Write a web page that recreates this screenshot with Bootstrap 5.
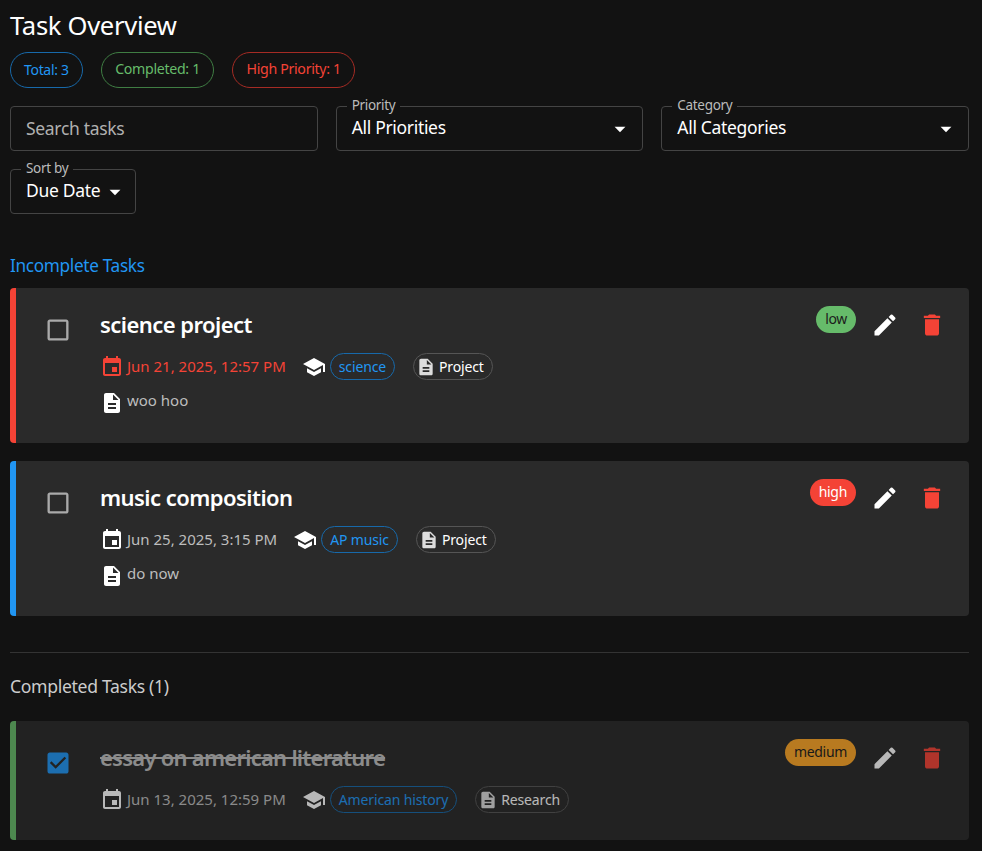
<!DOCTYPE html>
<html lang="en">
<head>
<meta charset="utf-8">
<title>Task Overview</title>
<link href="https://cdn.jsdelivr.net/npm/bootstrap@5.3.0/dist/css/bootstrap.min.css" rel="stylesheet">
<style>
html,body{background:#121212;}
body{font-family:"Noto Sans","Open Sans",sans-serif;color:#fff;height:851px;overflow:hidden;letter-spacing:-.02em;}
.page-wrap{padding:10px 13px 0 10px;}
.icon-svg{fill:currentColor;display:block;flex:none;}
.page-title{font-size:25.6px;font-weight:400;line-height:31px;margin:0;}
.stats-row{gap:18px;margin-top:11px;}
.stat-chip{height:36px;padding:0 13px 2px;border:1px solid;border-radius:18px;font-size:14.2px;display:flex;align-items:center;}
.stat-blue{color:#2196f3;border-color:#1769aa;font-size:14px;}
.stat-green{color:#66bb6a;border-color:#3f7d43;padding:0 13.5px 2px;}
.stat-red{color:#f44336;border-color:#a52b24;}
.filters{gap:18px;margin-top:18px;}
.filter-box{position:relative;height:45px;border:1px solid #444;border-radius:4px;display:flex;align-items:center;justify-content:space-between;padding:0 9px 0 15px;font-size:17.5px;}
.filter-grow{flex:1 1 0;min-width:0;}
.filter-sort{width:126px;margin-top:18px;padding-right:7px;}
.filter-search{color:#b0b0b0;}
.filter-value{position:relative;top:-1px;}
.filter-label{position:absolute;left:10px;top:-10px;background:#121212;padding:0 5px;font-size:13.5px;line-height:16px;color:#bbb;}
.section-blue{color:#2196f3;font-size:17.2px;line-height:24px;margin:40px 0 10px;font-weight:400;}
.task-item{background:#2a2a2a;border:0;border-left:6px solid;border-radius:4px;display:flex;position:relative;margin-bottom:18px;padding:22px 23px 27px 27.5px;}
.tone-red{border-left-color:#f44336;}
.tone-blue{border-left-color:#2196f3;}
.tone-green{border-left-color:#66bb6a;}
.task-done{opacity:.7;margin-bottom:0;}
.task-check{width:28px;height:28px;margin-right:28.5px;margin-top:6px;color:#aaa;}
.task-check.on{color:#2196f3;}
.task-main{flex:1;min-width:0;}
.task-title{font-size:22px;font-weight:600;line-height:29px;margin:0;letter-spacing:-.025em;}
.task-done .task-title{text-decoration:line-through;color:#c0c0c0;letter-spacing:-.034em;}
.meta-row{display:flex;align-items:center;margin-top:14px;height:27px;font-size:15px;color:#ccc;letter-spacing:0;}
.meta-date{display:flex;align-items:center;gap:3px;margin-right:16px;color:#bdbdbd;}
.meta-date.late{color:#f44336;}
.meta-school{margin-right:4px;color:#fff;}
.tag-chip{height:27px;border:1px solid;border-radius:14px;display:flex;align-items:center;font-size:14px;letter-spacing:-.01em;}
.tag-blue{color:#2196f3;border-color:#1769aa;padding:0 8px;margin-right:18px;}
.tag-grey{color:#fff;border-color:#555;padding:0 8px 0 2px;gap:3px;}
.tag-grey .icon-svg{color:#ddd;}
.note-row{display:flex;align-items:flex-start;gap:3px;margin:10px 0 1px;font-size:15px;color:#bdbdbd;line-height:20px;letter-spacing:0;}
.note-row .icon-svg{color:#fff;margin-top:1px;}
.task-side{position:absolute;top:18px;right:23px;display:flex;align-items:flex-start;}
.prio-pill{height:27px;border-radius:14px;padding:0 9px 2px;font-size:14px;display:flex;align-items:center;margin-right:15px;}
.prio-low{background:#66bb6a;color:#1c1c1c;}
.prio-high{background:#f44336;color:#fff;}
.prio-medium{background:#ffa726;color:#1c1c1c;}
.act-edit{color:#fff;margin-top:5px;margin-right:19px;}
.act-del{color:#f44336;margin-top:5px;}
.section-rule{border:0;border-top:1px solid #333;opacity:1;margin:36px 0 21px;}
.section-muted{color:#ccc;font-size:17.6px;line-height:24px;margin:0 0 23px;font-weight:400;}
</style>
</head>
<body>
<svg width="0" height="0" class="position-absolute">
<defs>
<symbol id="i-event" viewBox="0 0 24 24"><path d="M17 12h-5v5h5v-5zM16 1v2H8V1H6v2H5c-1.11 0-1.99.9-1.99 2L3 19c0 1.1.89 2 2 2h14c1.1 0 2-.9 2-2V5c0-1.1-.9-2-2-2h-1V1h-2zm3 18H5V8h14v11z"/></symbol>
<symbol id="i-school" viewBox="0 0 24 24"><path d="M5 13.18v4L12 21l7-3.82v-4L12 17l-7-3.82zM12 3 1 9l11 6 9-4.91V17h2V9L12 3z"/></symbol>
<symbol id="i-doc" viewBox="0 0 24 24"><path d="M14 2H6c-1.1 0-1.99.9-1.99 2L4 20c0 1.1.89 2 1.99 2H18c1.1 0 2-.9 2-2V8l-6-6zm2 16H8v-2h8v2zm0-4H8v-2h8v2zm-3-5V3.5L18.5 9H13z"/></symbol>
<symbol id="i-edit" viewBox="0 0 24 24"><path d="M3 17.25V21h3.75L17.81 9.94l-3.75-3.75L3 17.25zM20.71 7.04c.39-.39.39-1.02 0-1.41l-2.34-2.34a.9959.9959 0 0 0-1.41 0l-1.83 1.83 3.75 3.75 1.83-1.83z"/></symbol>
<symbol id="i-del" viewBox="0 0 24 24"><path d="M6 19c0 1.1.9 2 2 2h8c1.1 0 2-.9 2-2V7H6v12zM19 4h-3.5l-1-1h-5l-1 1H5v2h14V4z"/></symbol>
<symbol id="i-box" viewBox="0 0 24 24"><path d="M19 5v14H5V5h14m0-2H5c-1.1 0-2 .9-2 2v14c0 1.1.9 2 2 2h14c1.1 0 2-.9 2-2V5c0-1.1-.9-2-2-2z"/></symbol>
<symbol id="i-checked" viewBox="0 0 24 24"><path d="M19 3H5c-1.11 0-2 .9-2 2v14c0 1.1.89 2 2 2h14c1.11 0 2-.89 2-2V5c0-1.1-.89-2-2-2zm-9 14l-5-5 1.41-1.41L10 14.17l7.59-7.59L19 8l-9 9z"/></symbol>
<symbol id="i-drop" viewBox="0 0 24 24"><path d="M7 10l5 5 5-5z"/></symbol>
</defs>
</svg>
<div class="page-wrap">
  <h1 class="page-title">Task Overview</h1>
  <div class="d-flex stats-row">
    <span class="stat-chip stat-blue">Total: 3</span>
    <span class="stat-chip stat-green">Completed: 1</span>
    <span class="stat-chip stat-red">High Priority: 1</span>
  </div>
  <div class="d-flex filters">
    <div class="filter-box filter-grow filter-search">Search tasks</div>
    <div class="filter-box filter-grow"><span class="filter-label">Priority</span><span class="filter-value">All Priorities</span><svg class="icon-svg" width="26" height="26"><use href="#i-drop"/></svg></div>
    <div class="filter-box filter-grow"><span class="filter-label">Category</span><span class="filter-value">All Categories</span><svg class="icon-svg" width="26" height="26"><use href="#i-drop"/></svg></div>
  </div>
  <div class="filter-box filter-sort"><span class="filter-label">Sort by</span><span class="filter-value">Due Date</span><svg class="icon-svg" width="26" height="26"><use href="#i-drop"/></svg></div>

  <h2 class="section-blue">Incomplete Tasks</h2>

  <div class="task-item tone-red">
    <svg class="icon-svg task-check" width="28" height="28"><use href="#i-box"/></svg>
    <div class="task-main">
      <h3 class="task-title">science project</h3>
      <div class="meta-row">
        <span class="meta-date late"><svg class="icon-svg" width="24" height="24"><use href="#i-event"/></svg>Jun 21, 2025, 12:57 PM</span>
        <svg class="icon-svg meta-school" width="24" height="24"><use href="#i-school"/></svg>
        <span class="tag-chip tag-blue">science</span>
        <span class="tag-chip tag-grey"><svg class="icon-svg" width="20" height="20"><use href="#i-doc"/></svg>Project</span>
      </div>
      <div class="note-row"><svg class="icon-svg" width="24" height="24"><use href="#i-doc"/></svg>woo hoo</div>
    </div>
    <div class="task-side">
      <span class="prio-pill prio-low">low</span>
      <svg class="icon-svg act-edit" width="28" height="28"><use href="#i-edit"/></svg>
      <svg class="icon-svg act-del" width="28" height="28"><use href="#i-del"/></svg>
    </div>
  </div>

  <div class="task-item tone-blue">
    <svg class="icon-svg task-check" width="28" height="28"><use href="#i-box"/></svg>
    <div class="task-main">
      <h3 class="task-title">music composition</h3>
      <div class="meta-row">
        <span class="meta-date"><svg class="icon-svg text-white" width="24" height="24"><use href="#i-event"/></svg>Jun 25, 2025, 3:15 PM</span>
        <svg class="icon-svg meta-school" width="24" height="24"><use href="#i-school"/></svg>
        <span class="tag-chip tag-blue">AP music</span>
        <span class="tag-chip tag-grey"><svg class="icon-svg" width="20" height="20"><use href="#i-doc"/></svg>Project</span>
      </div>
      <div class="note-row"><svg class="icon-svg" width="24" height="24"><use href="#i-doc"/></svg>do now</div>
    </div>
    <div class="task-side">
      <span class="prio-pill prio-high">high</span>
      <svg class="icon-svg act-edit" width="28" height="28"><use href="#i-edit"/></svg>
      <svg class="icon-svg act-del" width="28" height="28"><use href="#i-del"/></svg>
    </div>
  </div>

  <hr class="section-rule">
  <h2 class="section-muted">Completed Tasks (1)</h2>

  <div class="task-item tone-green task-done">
    <svg class="icon-svg task-check on" width="28" height="28"><use href="#i-checked"/></svg>
    <div class="task-main">
      <h3 class="task-title">essay on american literature</h3>
      <div class="meta-row">
        <span class="meta-date"><svg class="icon-svg text-white" width="24" height="24"><use href="#i-event"/></svg>Jun 13, 2025, 12:59 PM</span>
        <svg class="icon-svg meta-school" width="24" height="24"><use href="#i-school"/></svg>
        <span class="tag-chip tag-blue">American history</span>
        <span class="tag-chip tag-grey"><svg class="icon-svg" width="20" height="20"><use href="#i-doc"/></svg>Research</span>
      </div>
    </div>
    <div class="task-side">
      <span class="prio-pill prio-medium">medium</span>
      <svg class="icon-svg act-edit" width="28" height="28"><use href="#i-edit"/></svg>
      <svg class="icon-svg act-del" width="28" height="28"><use href="#i-del"/></svg>
    </div>
  </div>
</div>
</body>
</html>
